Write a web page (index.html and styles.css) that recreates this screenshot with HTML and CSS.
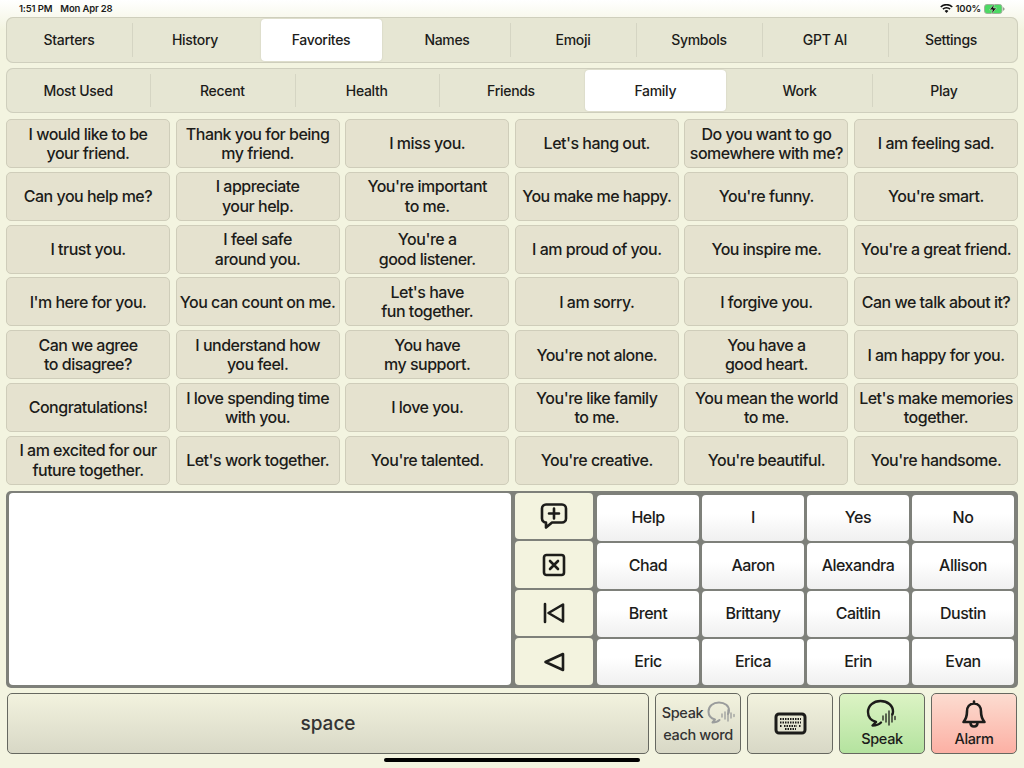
FILE: index.html
```html
<!DOCTYPE html>
<html lang="en">
<head>
<meta charset="utf-8">
<title>Favorites</title>
<link rel="stylesheet" href="styles.css">
</head>
<body>
<div class="page">
  <div class="status">
    <div class="status-left"><span>1:51 PM</span><span>Mon Apr 28</span></div>
    <div class="status-right">
      <svg class="wifi" viewBox="0 0 14 10" width="13" height="9"><path d="M7 10 4.900 7.700a3 3 0 0 1 4.200 0zM3.600 6.400 2.400 5.100a6.600 6.600 0 0 1 9.200 0l-1.200 1.300a4.800 4.800 0 0 0-6.800 0zM1.200 3.900 0 2.700a10 10 0 0 1 14 0l-1.200 1.200a8.300 8.300 0 0 0-11.600 0z" fill="#111"/></svg>
      <span>100%</span>
      <svg class="batt" viewBox="0 0 21 10" width="21" height="10"><rect x=".5" y=".5" width="17.500" height="9" rx="2.400" fill="#4cd964" stroke="#9fb09a"/><path d="M19 3.300c1 .3 1.600 1 1.600 1.700S20 6.400 19 6.700z" fill="#9a9a90"/><path d="M10.300 0 5.500 5.800h3l-.9 4.200 4.900-6h-3z" fill="#111" stroke="#e9f5dc" stroke-width=".5"/></svg>
    </div>
  </div>

  <nav class="tabs tabs-main">
    <div class="tab">Starters</div><div class="tab">History</div><div class="tab active">Favorites</div><div class="tab">Names</div><div class="tab">Emoji</div><div class="tab">Symbols</div><div class="tab">GPT AI</div><div class="tab">Settings</div>
  </nav>
  <nav class="tabs tabs-sub">
    <div class="tab">Most Used</div><div class="tab">Recent</div><div class="tab">Health</div><div class="tab">Friends</div><div class="tab active">Family</div><div class="tab">Work</div><div class="tab">Play</div>
  </nav>

  <section class="phrases">
    <div class="phrase">I would like to be<br>your friend.</div>
    <div class="phrase">Thank you for being<br>my friend.</div>
    <div class="phrase">I miss you.</div>
    <div class="phrase">Let's hang out.</div>
    <div class="phrase">Do you want to go<br>somewhere with me?</div>
    <div class="phrase">I am feeling sad.</div>
    <div class="phrase">Can you help me?</div>
    <div class="phrase">I appreciate<br>your help.</div>
    <div class="phrase">You're important<br>to me.</div>
    <div class="phrase">You make me happy.</div>
    <div class="phrase">You're funny.</div>
    <div class="phrase">You're smart.</div>
    <div class="phrase">I trust you.</div>
    <div class="phrase">I feel safe<br>around you.</div>
    <div class="phrase">You're a<br>good listener.</div>
    <div class="phrase">I am proud of you.</div>
    <div class="phrase">You inspire me.</div>
    <div class="phrase">You're a great friend.</div>
    <div class="phrase">I'm here for you.</div>
    <div class="phrase">You can count on me.</div>
    <div class="phrase">Let's have<br>fun together.</div>
    <div class="phrase">I am sorry.</div>
    <div class="phrase">I forgive you.</div>
    <div class="phrase">Can we talk about it?</div>
    <div class="phrase">Can we agree<br>to disagree?</div>
    <div class="phrase">I understand how<br>you feel.</div>
    <div class="phrase">You have<br>my support.</div>
    <div class="phrase">You're not alone.</div>
    <div class="phrase">You have a<br>good heart.</div>
    <div class="phrase">I am happy for you.</div>
    <div class="phrase">Congratulations!</div>
    <div class="phrase">I love spending time<br>with you.</div>
    <div class="phrase">I love you.</div>
    <div class="phrase">You're like family<br>to me.</div>
    <div class="phrase">You mean the world<br>to me.</div>
    <div class="phrase">Let's make memories<br>together.</div>
    <div class="phrase">I am excited for our<br>future together.</div>
    <div class="phrase">Let's work together.</div>
    <div class="phrase">You're talented.</div>
    <div class="phrase">You're creative.</div>
    <div class="phrase">You're beautiful.</div>
    <div class="phrase">You're handsome.</div>
  </section>

  <section class="panel">
    <div class="message"></div>
    <div class="tools">
      <div class="tool"><svg viewBox="0 0 28 26" width="28" height="26"><path d="M6 1.500h16a4 4 0 0 1 4 4v10a4 4 0 0 1-4 4H12l-6 5v-5a4 4 0 0 1-4-4v-10a4 4 0 0 1 4-4zM14 5.500v10M9 10.500h10" class="ico"/></svg></div>
      <div class="tool"><svg viewBox="0 0 24 24" width="24" height="24"><rect x="2" y="2" width="20" height="20" rx="2.500" class="ico"/><path d="M8 8l8 8M16 8l-8 8" class="ico"/></svg></div>
      <div class="tool"><svg viewBox="0 0 22 22" width="22" height="22"><path d="M2 2v18M20 2.500v17L5.500 11z" class="ico"/></svg></div>
      <div class="tool"><svg viewBox="0 0 22 20" width="22" height="20"><path d="M20 2v16L2.500 10z" class="ico"/></svg></div>
    </div>
    <div class="words">
      <div class="word">Help</div><div class="word">I</div><div class="word">Yes</div><div class="word">No</div>
      <div class="word">Chad</div><div class="word">Aaron</div><div class="word">Alexandra</div><div class="word">Allison</div>
      <div class="word">Brent</div><div class="word">Brittany</div><div class="word">Caitlin</div><div class="word">Dustin</div>
      <div class="word">Eric</div><div class="word">Erica</div><div class="word">Erin</div><div class="word">Evan</div>
    </div>
  </section>

  <section class="actions">
    <div class="action space">space</div>
    <div class="action each">
      <div class="each-top"><span>Speak</span>
        <svg viewBox="0 0 30 24" width="30" height="24"><path d="M9 18.500c-4-1-6.500-4-6.500-8C2.500 5 7 1.500 13 1.500s10 3.500 10 8c0 1.500-.3 2.500-1 3.500M9 18.500l-2.500 3c3 0 5.500-1 7-2.500" class="voice-grey"/><path d="M16 13v3M19 11v7M22 9v11M25 12v5M28 13.500v2" class="voice-grey thin"/></svg>
      </div>
      <span class="each-bottom">each word</span>
    </div>
    <div class="action"><svg viewBox="0 0 33 23" width="33" height="23"><rect x="2" y="2" width="29" height="19" rx="3" class="ico kbd"/><path d="M6 7h21M6 10.500h21M6 14h2M11 17h11M25 14h2M10 14h13" class="keys"/></svg></div>
    <div class="action speak">
      <svg viewBox="0 0 34 30" width="34" height="30"><path d="M11 23c-5-1.500-8-5-8-10C3 6.500 8.500 2 15.500 2S28 6.500 28 12.500c0 1-.2 2-.6 3M11 23l-3.500 3.500c3.500 0 6.500-1 8.500-3" class="voice"/><path d="M18 17v4M21 15v8M24 12v14M27 15v8M30 17.500v3" class="voice thin"/></svg>
      <span class="speak-label">Speak</span>
    </div>
    <div class="action alarm">
      <svg viewBox="0 0 26 30" width="26" height="30"><path d="M13 3.500c-4.500 0-7 3.500-7 8 0 5-1 7.500-3.500 10.500h21c-2.500-3-3.500-5.500-3.500-10.500 0-4.500-2.500-8-7-8zM13 1.500v2M9.500 22.500c0 2.500 1.500 4 3.500 4s3.500-1.500 3.500-4" class="ico"/></svg>
      <span>Alarm</span>
    </div>
  </section>

  <div class="home"></div>
</div>
</body>
</html>
```
FILE: styles.css
```css
* { box-sizing: border-box; }
html, body { margin: 0; padding: 0; }
body {
  width: 1024px;
  height: 768px;
  overflow: hidden;
  font-family: Inter, "Liberation Sans", sans-serif;
  color: #1c1c1a;
  background: linear-gradient(#ffffff 0, #f3f4e0 30px);
}
.page {
  height: 768px;
  padding: 0 6px;
  display: flex;
  flex-direction: column;
}
.status {
  height: 17px;
  display: flex;
  justify-content: space-between;
  align-items: center;
  padding: 0 13px 0 13px;
  font-size: 9.500px;
  font-weight: 600;
  letter-spacing: -.15px;
}
.status-left { display: flex; gap: 8px; }
.status-right { display: flex; align-items: center; gap: 3px; }
.tabs {
  display: grid;
  grid-auto-flow: column;
  grid-auto-columns: 1fr;
  background: #e6e6d3;
  box-shadow: inset 0 0 0 1px #cfcfbd;
  border-radius: 7px;
}
.tabs-main { height: 46px; padding: 2px 4px 2px 0; }
.tabs-sub { height: 45px; margin-top: 5px; padding: 2px 2px 2px 0; }
.tab {
  display: flex;
  align-items: center;
  justify-content: center;
  font-size: 14px;
  font-weight: 500;
  letter-spacing: -.3px;
  position: relative;
}
.tabs-main .tab { padding-bottom: 1px; }
.tab + .tab::before {
  content: "";
  position: absolute;
  left: 0;
  top: 4px;
  bottom: 4px;
  width: 1px;
  background: #d5d5c3;
}
.tab.active {
  background: #fff;
  border-radius: 4px;
  box-shadow: 0 0 2px rgba(0, 0, 0, .12);
}
.tabs-main .active { margin: 0 2.500px; }
.tabs-sub .active { margin: 0 1.500px; }
.tab.active::before, .tab.active + .tab::before { display: none; }
.phrases {
  margin-top: 6px;
  display: grid;
  grid-template-columns: repeat(6, 1fr);
  grid-template-rows: repeat(7, 49px);
  column-gap: 5.600px;
  row-gap: 3.830px;
}
.phrase {
  display: flex;
  align-items: center;
  justify-content: center;
  text-align: center;
  white-space: nowrap;
  padding-top: 1px;
  font-size: 16px;
  font-weight: 450;
  letter-spacing: -.5px;
  line-height: 19.500px;
  background: #e5e2cf;
  border: 1px solid #cfcdba;
  border-radius: 5px;
}
.panel {
  margin-top: 6px;
  height: 197px;
  background: #7e807a;
  border-radius: 5px;
  padding: 2px 4px 3px 3px;
  display: flex;
}
.message {
  width: 502px;
  background: #fff;
  border-radius: 4px;
}
.tools {
  width: 78px;
  margin-left: 4px;
  display: grid;
  grid-template-rows: repeat(4, 1fr);
  row-gap: 2px;
}
.tool {
  background: #f3f3df;
  border-radius: 4px;
  display: flex;
  align-items: center;
  justify-content: center;
}
.words {
  flex: 1;
  margin-left: 4px;
  padding-top: 2px;
  display: grid;
  grid-template-columns: repeat(4, 1fr);
  grid-template-rows: repeat(4, 1fr);
  column-gap: 3px;
  row-gap: 2px;
}
.word {
  display: flex;
  align-items: center;
  justify-content: center;
  padding-bottom: 1px;
  background: linear-gradient(#ffffff 40%, #f0f0f0);
  border-radius: 4px;
  font-size: 16px;
  font-weight: 450;
  letter-spacing: -.5px;
}
.actions {
  margin-top: 5px;
  height: 61px;
  padding: 0 1px;
  display: flex;
  gap: 6px;
}
.action {
  width: 86px;
  display: flex;
  flex-direction: column;
  align-items: center;
  justify-content: center;
  border: 1px solid #666860;
  border-radius: 5px;
  background: linear-gradient(#f2f2de, #d8d8c6);
  font-size: 14.500px;
  font-weight: 450;
  letter-spacing: -.35px;
}
.space {
  flex: 1;
  font-size: 19px;
  font-weight: 500;
  letter-spacing: 0;
  color: #333;
}
.each { color: #333; justify-content: flex-start; padding-top: 4px; }
.each-top { display: flex; align-items: center; gap: 3px; height: 30px; padding-left: 2px; }
.each-bottom { line-height: 14px; }
.speak { background: linear-gradient(#dcf3c4, #b4e39f); }
.speak-label { margin-top: 1px; }
.alarm { background: linear-gradient(#fcdcd0, #fcb0a4); }
.ico, .voice, .voice-grey, .keys {
  fill: none;
  stroke: #1c1c1a;
  stroke-width: 2.600;
  stroke-linecap: round;
  stroke-linejoin: round;
}
.kbd { stroke-width: 3; }
.voice { stroke-width: 2.400; }
.voice-grey { stroke: #9a9c9c; stroke-width: 2; }
.thin { stroke-width: 1.300; }
.keys { stroke-width: 2; stroke-dasharray: 1.500 1; stroke-linecap: butt; }
.home {
  width: 256px;
  height: 4px;
  margin: 4px auto 0;
  border-radius: 2px;
  background: #000;
}
```
